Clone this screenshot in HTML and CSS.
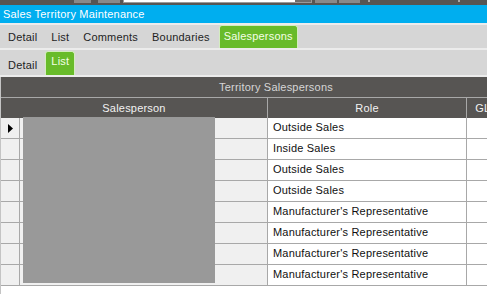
FILE: index.html
```html
<!DOCTYPE html>
<html lang="en">
<head>
  <meta charset="UTF-8">
  <title>Sales Territory Maintenance</title>
  <link rel="stylesheet" href="styles.css">
</head>
<body>

  <div class="page">

    <!-- toolbar strip (mostly cut off at the top) -->
    <div class="topstrip">
      <span class="tb-btn tb-a"></span>
      <span class="tb-btn tb-b"></span>
      <span class="tb-field"></span>
      <span class="tb-drop"></span>
      <span class="tb-btn tb-c"></span>
      <span class="tb-btn tb-d"></span>
      <span class="tb-dot tb-e"></span>
      <span class="tb-dot tb-f"></span>
    </div>

    <div class="titlebar">Sales Territory Maintenance</div>

    <!-- Main tabs -->
    <nav class="tabs tabs-main">
      <span class="tab">Detail</span>
      <span class="tab">List</span>
      <span class="tab">Comments</span>
      <span class="tab">Boundaries</span>
      <span class="tab active">Salespersons</span>
    </nav>

    <!-- Sub tabs -->
    <nav class="tabs tabs-sub">
      <span class="tab">Detail</span>
      <span class="tab active">List</span>
    </nav>

    <!-- Grid -->
    <div class="grid">
      <div class="grid-caption">Territory Salespersons</div>
      <div class="grid-head">
        <div class="hcell col-person">Salesperson</div>
        <div class="hcell col-role">Role</div>
        <div class="hcell col-gl">GL Account</div>
      </div>
      <div class="grid-body">
        <div class="row">
          <div class="rowhdr">
            <svg class="marker" width="5" height="9" viewBox="0 0 5 9"><polygon points="0,0 5,4.5 0,9" fill="#000"/></svg>
          </div>
          <div class="cell col-name"></div>
          <div class="cell col-role">Outside Sales</div>
          <div class="cell col-gl"></div>
        </div>
        <div class="row">
          <div class="rowhdr"></div>
          <div class="cell col-name"></div>
          <div class="cell col-role">Inside Sales</div>
          <div class="cell col-gl"></div>
        </div>
        <div class="row">
          <div class="rowhdr"></div>
          <div class="cell col-name"></div>
          <div class="cell col-role">Outside Sales</div>
          <div class="cell col-gl"></div>
        </div>
        <div class="row">
          <div class="rowhdr"></div>
          <div class="cell col-name"></div>
          <div class="cell col-role">Outside Sales</div>
          <div class="cell col-gl"></div>
        </div>
        <div class="row">
          <div class="rowhdr"></div>
          <div class="cell col-name"></div>
          <div class="cell col-role">Manufacturer's Representative</div>
          <div class="cell col-gl"></div>
        </div>
        <div class="row">
          <div class="rowhdr"></div>
          <div class="cell col-name"></div>
          <div class="cell col-role">Manufacturer's Representative</div>
          <div class="cell col-gl"></div>
        </div>
        <div class="row">
          <div class="rowhdr"></div>
          <div class="cell col-name"></div>
          <div class="cell col-role">Manufacturer's Representative</div>
          <div class="cell col-gl"></div>
        </div>
        <div class="row">
          <div class="rowhdr"></div>
          <div class="cell col-name"></div>
          <div class="cell col-role">Manufacturer's Representative</div>
          <div class="cell col-gl"></div>
        </div>

        <!-- names are blanked out -->
        <div class="redact"></div>
      </div>
    </div>

  </div>

</body>
</html>
```

FILE: styles.css
```css
html, body {
  margin: 0;
  padding: 0;
  height: 100%;
  overflow: hidden;
}
body {
  font-family: "Liberation Sans", Arial, sans-serif;
  font-size: 11px;
  letter-spacing: 0.2px;
  background: #fff;
  color: #111;
}
.page {
  display: flex;
  flex-direction: column;
  height: 100vh;
  width: 551px;
}

/* toolbar strip */
.topstrip {
  display: flex;
  align-items: flex-start;
  height: 5px;
  background: #575553;
  flex: none;
}
.tb-btn {
  height: 3px;
  background: #8a8988;
}
.tb-a { width: 17px; margin-left: 74px; }
.tb-b { width: 22px; margin-left: 7px; }
.tb-c { width: 22px; margin-left: 3px; }
.tb-d { width: 21px; margin-left: 2px; }
.tb-field {
  width: 171px;
  height: 2px;
  margin-left: 3px;
  background: #fff;
  border-left: 1px solid #9a9a9a;
  border-bottom: 1px solid #9a9a9a;
}
.tb-drop {
  width: 16px;
  height: 2px;
  background: #6e6c6a;
  border-right: 1px solid #9a9a9a;
  border-bottom: 1px solid #9a9a9a;
}
.tb-dot {
  width: 2px;
  height: 2px;
  background: #a8a7a6;
}
.tb-e { margin-left: 8px; }
.tb-f { margin-left: 88px; }

/* title */
.titlebar {
  height: 18px;
  line-height: 18px;
  padding-left: 3px;
  background: #00aeef;
  color: #fff;
  flex: none;
}

/* tabs */
.tabs {
  display: flex;
  align-items: flex-end;
  background: #d6d6d6;
  border-top: 2px solid #ececec;
  padding-left: 1px;
  flex: none;
}
.tabs-main {
  height: 23px;
}
.tabs-sub {
  height: 25px;
  border-bottom: 2px solid #ececec;
}
.tab {
  padding: 0 7px;
  line-height: 21px;
  color: #1e1e1e;
}
.tabs-sub .tab {
  line-height: 20px;
}
.tab.active {
  background: #68bb2a;
  color: #f4ffe6;
  border: 1px solid #d4ecc0;
  border-bottom: none;
  border-radius: 3px 3px 0 0;
  padding: 0 4px 0 4px;
  margin-left: 2px;
  line-height: 20px;
  height: 22px;
}
.tabs-sub .tab.active {
  padding: 0 5px;
  margin-left: 1px;
  height: 23px;
  line-height: 18px;
}

/* grid */
.grid {
  flex: 1;
  display: flex;
  flex-direction: column;
  background: #575553;
  border-left: 1px solid #c4c4c4;
}
.grid-caption {
  height: 20px;
  line-height: 20px;
  text-align: center;
  color: #d6d6d6;
  border-bottom: 1px solid #a8a8a8;
}
.grid-head {
  display: flex;
  height: 20px;
  line-height: 20px;
  color: #f2f2f2;
}
.hcell {
  text-align: center;
  border-right: 1px solid #a8a8a8;
}
.hcell.col-person { width: 266px; }
.hcell.col-role { width: 198px; }
.hcell.col-gl {
  width: 75px;
  border-right: none;
}

.grid-body {
  flex: 1;
  position: relative;
  background: #fff;
}
.row {
  display: flex;
  height: 20px;
  border-bottom: 1px solid #a8a8a8;
}
.rowhdr {
  width: 18px;
  background: #f0f0f0;
  border-right: 1px solid #a8a8a8;
  display: flex;
  align-items: center;
  padding-left: 7px;
  box-sizing: border-box;
}
.rowhdr {
  width: 19px;
}
.cell {
  line-height: 19px;
  border-right: 1px solid #a8a8a8;
  color: #101010;
}
.cell.col-name {
  width: 247px;
  background: #f0f0f0;
}
.cell.col-role {
  width: 193px;
  padding-left: 5px;
}
.cell.col-gl {
  width: 84px;
  border-right: none;
}
.redact {
  position: absolute;
  top: -1px;
  left: 22px;
  width: 192px;
  height: 166px;
  background: #999;
}
```
